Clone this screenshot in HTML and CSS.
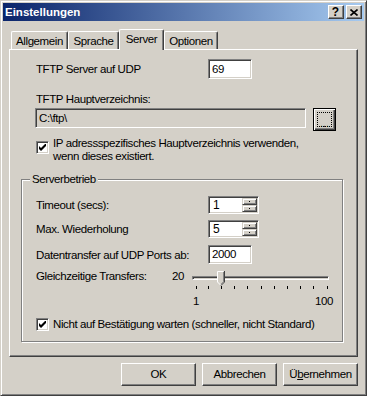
FILE: index.html
```html
<!DOCTYPE html>
<html lang="de">
<head>
    <meta charset="UTF-8">
    <title>Einstellungen</title>
    <link rel="stylesheet" href="styles.css">
</head>
<body>
    <div class="window">
        <div class="titlebar">
            <span class="title">Einstellungen</span>
            <div class="caption-btns">
                <span class="cap-btn help">?</span>
                <span class="cap-btn">
                    <svg width="8" height="7" viewBox="0 0 8 7"><path d="M0.5 0.5 L7.5 6.5 M7.5 0.5 L0.5 6.5" stroke="#000" stroke-width="1.6" fill="none"/></svg>
                </span>
            </div>
        </div>

        <div class="content">
            <div class="tabs">
                <div class="tab tab-allg">Allgemein</div>
                <div class="tab tab-spr">Sprache</div>
                <div class="tab tab-srv active">Server</div>
                <div class="tab tab-opt">Optionen</div>
            </div>

            <div class="panel">
                <div class="top-section">
                    <div class="row row-udp">
                        <span class="label">TFTP Server auf UDP</span>
                        <div class="field field-small">69</div>
                    </div>
                    <div class="plain-label">TFTP Hauptverzeichnis:</div>
                    <div class="row row-path">
                        <div class="field field-path">C:\ftp\</div>
                        <div class="browse-btn"><span class="focus-rect">...</span></div>
                    </div>
                    <div class="check-row check-ip">
                        <span class="checkbox">
                            <svg width="7" height="7" viewBox="0 0 7 7"><polygon points="0,2 2,4 7,-1 7,2 2,7 0,5" fill="#000"/></svg>
                        </span>
                        <span class="check-text">IP adressspezifisches Hauptverzeichnis verwenden,<br>wenn dieses existiert.</span>
                    </div>
                </div>

                <div class="group">
                    <span class="legend">Serverbetrieb</span>
                    <div class="row row-timeout">
                        <span class="label">Timeout (secs):</span>
                        <div class="spin">
                            <span class="spin-value">1</span>
                            <div class="spin-btns">
                                <span class="spin-btn"><i class="arrow-up"></i></span>
                                <span class="spin-btn"><i class="arrow-down"></i></span>
                            </div>
                        </div>
                    </div>
                    <div class="row row-retry">
                        <span class="label">Max. Wiederholung</span>
                        <div class="spin">
                            <span class="spin-value">5</span>
                            <div class="spin-btns">
                                <span class="spin-btn"><i class="arrow-up"></i></span>
                                <span class="spin-btn"><i class="arrow-down"></i></span>
                            </div>
                        </div>
                    </div>
                    <div class="row row-ports">
                        <span class="label">Datentransfer auf UDP Ports ab:</span>
                        <div class="field field-port">2000</div>
                    </div>
                    <div class="slider-row">
                        <span class="slider-label">Gleichzeitige Transfers:</span>
                        <span class="slider-value">20</span>
                        <div class="slider">
                            <div class="track"></div>
                            <svg class="thumb" width="8" height="15" viewBox="0 0 8 15">
                                <polygon points="0,0 7,0 7,11 3.5,14.5 0,11" fill="#D4D0C8"/>
                                <polyline points="0.5,11 0.5,0.5 6.5,0.5" stroke="#fff" fill="none"/>
                                <polyline points="7.5,0 7.5,11 4,14.5" stroke="#404040" fill="none"/>
                                <polyline points="6.5,1 6.5,10.8 3.8,13.5" stroke="#808080" fill="none"/>
                                <line x1="0.5" y1="11" x2="3.5" y2="14" stroke="#fff"/>
                            </svg>
                            <span class="tick" style="left: 8px"></span>
                            <span class="tick" style="left: 20px"></span>
                            <span class="tick" style="left: 33px"></span>
                            <span class="tick" style="left: 46px"></span>
                            <span class="tick" style="left: 59px"></span>
                            <span class="tick" style="left: 73px"></span>
                            <span class="tick" style="left: 86px"></span>
                            <span class="tick" style="left: 99px"></span>
                            <span class="tick" style="left: 112px"></span>
                            <span class="tick" style="left: 125px"></span>
                            <span class="tick" style="left: 139px"></span>
                            <span class="scale-min">1</span>
                            <span class="scale-max">100</span>
                        </div>
                    </div>
                    <div class="check-row check-ack">
                        <span class="checkbox">
                            <svg width="7" height="7" viewBox="0 0 7 7"><polygon points="0,2 2,4 7,-1 7,2 2,7 0,5" fill="#000"/></svg>
                        </span>
                        <span class="check-text">Nicht auf Bestätigung warten (schneller, nicht Standard)</span>
                    </div>
                </div>
            </div>

            <div class="buttons">
                <div class="btn">OK</div>
                <div class="btn">Abbrechen</div>
                <div class="btn">Ü<u>b</u>ernehmen</div>
            </div>
        </div>
    </div>
</body>
</html>
```

FILE: styles.css
```css
* {
    box-sizing: border-box;
}
body {
    margin: 0;
    background-color: #D4D0C8;
    font-family: "Liberation Sans", Arial, sans-serif;
    font-size: 11.5px;
    letter-spacing: -0.4px;
    color: #000;
}
.window {
    width: 367px;
    height: 396px;
    border: 1px solid;
    border-color: #D4D0C8 #404040 #404040 #D4D0C8;
    box-shadow: inset 1px 1px #fff, inset -1px -1px #808080;
    padding: 2px;
    background-color: #D4D0C8;
    display: flex;
    flex-direction: column;
}
.titlebar {
    height: 18px;
    background: linear-gradient(to right, #0A246A, #A6CAF0);
    display: flex;
    align-items: center;
    justify-content: space-between;
    padding: 0 2px 0 2px;
}
.title {
    color: #fff;
    font-weight: bold;
    font-size: 11.5px;
    letter-spacing: 0;
}
.caption-btns {
    display: flex;
    gap: 2px;
}
.cap-btn {
    width: 16px;
    height: 14px;
    background-color: #D4D0C8;
    border: 1px solid;
    border-color: #fff #404040 #404040 #fff;
    box-shadow: inset -1px -1px #808080;
    display: flex;
    align-items: center;
    justify-content: center;
    padding-right: 1px;
}
.cap-btn.help {
    font-weight: bold;
    font-size: 12px;
    letter-spacing: 0;
    line-height: 12px;
}
.content {
    flex: 1;
    display: flex;
    flex-direction: column;
    padding: 8px 6px 0 6px;
}

/* tabs */
.tabs {
    display: flex;
    align-items: flex-end;
    height: 20px;
    padding-left: 2px;
    position: relative;
    z-index: 1;
}
.tab {
    height: 18px;
    background-color: #D4D0C8;
    border-left: 1px solid #fff;
    border-top: 1px solid #fff;
    border-right: 1px solid #404040;
    box-shadow: inset -1px 0 #808080;
    border-radius: 2px 2px 0 0;
    text-align: center;
    line-height: 18px;
}
.tab.active {
    height: 21px;
    margin-bottom: -1px;
    line-height: 18px;
}
.tab-allg { width: 57px; }
.tab-spr { width: 51px; }
.tab-srv { width: 45px; }
.tab-opt { width: 54px; }

.panel {
    height: 308px;
    border: 1px solid;
    border-color: #fff #404040 #404040 #fff;
    box-shadow: inset -1px -1px #808080;
    padding-left: 11px;
}

/* form rows */
.top-section {
    padding-left: 15px;
}
.row {
    display: flex;
    align-items: center;
}
.label {
    width: 172px;
    flex-shrink: 0;
}
.row-udp {
    margin-top: 9px;
}
.plain-label {
    margin-top: 14px;
    line-height: 13px;
}
.row-path {
    margin-top: 2px;
    align-items: flex-start;
}
.field {
    height: 20px;
    background-color: #fff;
    border: 1px solid;
    border-color: #808080 #fff #fff #808080;
    box-shadow: inset 1px 1px #404040, inset -1px -1px #D4D0C8;
    padding: 0 3px;
    line-height: 18px;
}
.field-small {
    width: 44px;
}
.field-path {
    width: 271px;
    margin-left: -1px;
    background-color: #D4D0C8;
}
.field-port {
    width: 44px;
    height: 19px;
    line-height: 17px;
}
.browse-btn {
    width: 23px;
    height: 23px;
    margin-left: 7px;
    border: 1px solid #000;
    box-shadow: inset 1px 1px #fff, inset -1px -1px #404040, inset -2px -2px #808080;
    padding: 3px;
}
.focus-rect {
    display: block;
    width: 100%;
    height: 100%;
    border: 1px dotted #000;
    text-align: center;
    line-height: 20px;
    font-size: 11px;
    letter-spacing: 0;
}

.check-row {
    display: flex;
    align-items: center;
    gap: 4px;
}
.check-ip {
    margin-top: 6px;
    line-height: 13px;
    align-items: flex-start;
}
.check-ip .checkbox {
    margin-top: 4px;
}
.checkbox {
    width: 13px;
    height: 13px;
    flex-shrink: 0;
    background-color: #fff;
    border: 1px solid;
    border-color: #808080 #fff #fff #808080;
    box-shadow: inset 1px 1px #404040, inset -1px -1px #D4D0C8;
    display: flex;
    align-items: center;
    justify-content: center;
}

/* group box */
.group {
    position: relative;
    width: 322px;
    margin-top: 16px;
    border: 1px solid #808080;
    box-shadow: inset 1px 1px #fff, 1px 1px #fff;
    padding: 0 0 10px 14px;
}
.legend {
    position: absolute;
    top: -7px;
    left: 8px;
    padding: 0 2px;
    line-height: 13px;
    background-color: #D4D0C8;
}
.row-timeout {
    margin-top: 16px;
}
.row-retry {
    margin-top: 6px;
}
.row-ports {
    margin-top: 7px;
}
.spin {
    width: 51px;
    height: 18px;
    display: flex;
    background-color: #fff;
    border: 1px solid;
    border-color: #808080 #fff #fff #808080;
    box-shadow: inset 1px 1px #404040, inset -1px -1px #D4D0C8;
    padding: 1px;
}
.spin-value {
    flex: 1;
    padding-left: 3px;
    line-height: 14px;
    font-size: 12px;
}
.spin-btns {
    width: 15px;
    display: flex;
    flex-direction: column;
}
.spin-btn {
    flex: 1;
    background-color: #D4D0C8;
    border: 1px solid;
    border-color: #D4D0C8 #404040 #404040 #D4D0C8;
    box-shadow: inset 1px 1px #fff, inset -1px -1px #808080;
    display: flex;
    align-items: center;
    justify-content: center;
}
.arrow-up,
.arrow-down {
    width: 1px;
    height: 1px;
    background-color: #000;
}

/* slider */
.slider-row {
    display: flex;
    margin-top: 5px;
    height: 39px;
}
.slider-label {
    width: 136px;
    line-height: 14px;
}
.slider-value {
    width: 16px;
    line-height: 14px;
}
.slider {
    position: relative;
    width: 145px;
}
.track {
    position: absolute;
    top: 7px;
    left: 4px;
    right: 4px;
    height: 4px;
    border: 1px solid;
    border-color: #808080 #fff #fff #808080;
    box-shadow: inset 1px 1px #404040, inset -1px -1px #D4D0C8;
}
.thumb {
    position: absolute;
    top: 2px;
    left: 29px;
}
.tick {
    position: absolute;
    top: 17px;
    width: 1px;
    height: 3px;
    background-color: #000;
}
.scale-min,
.scale-max {
    position: absolute;
    top: 25px;
    line-height: 14px;
}
.scale-min {
    left: 5px;
}
.scale-max {
    right: 0;
}
.check-ack {
    margin-top: 10px;
    line-height: 13px;
}

/* dialog buttons */
.buttons {
    display: flex;
    justify-content: flex-end;
    gap: 6px;
    margin-top: 6px;
}
.btn {
    width: 75px;
    height: 23px;
    border: 1px solid;
    border-color: #fff #404040 #404040 #fff;
    box-shadow: inset -1px -1px #808080;
    text-align: center;
    line-height: 21px;
}
```
